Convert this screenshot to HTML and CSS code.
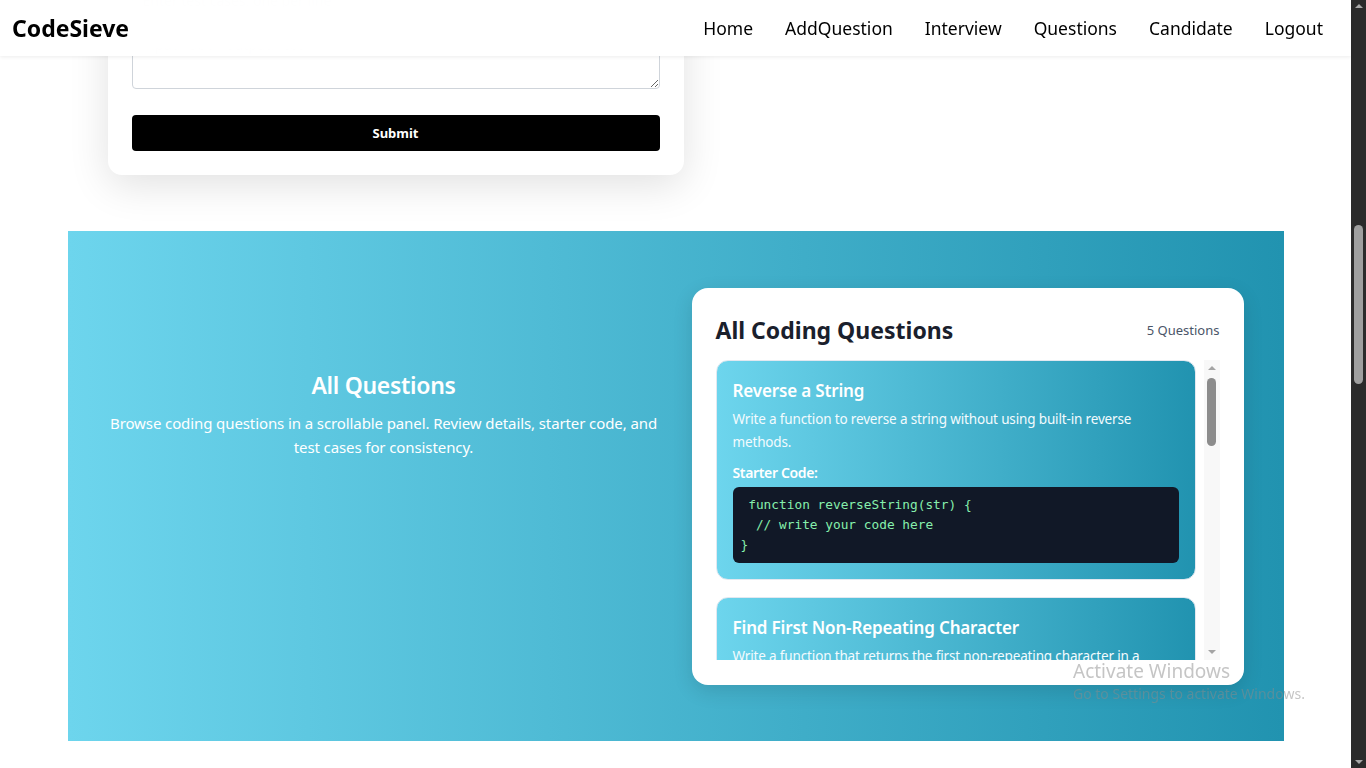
FILE: index.html
```html
<!DOCTYPE html>
<html lang="en">
<head>
<meta charset="utf-8">
<title>CodeSieve</title>
<link rel="stylesheet" href="styles.css">
</head>
<body>
<header class="topbar">
  <div class="logo">CodeSieve</div>
  <nav class="nav">
    <a href="#">Home</a>
    <a href="#">AddQuestion</a>
    <a href="#">Interview</a>
    <a href="#">Questions</a>
    <a href="#">Candidate</a>
    <a href="#">Logout</a>
  </nav>
</header>

<div class="viewport">
  <div class="page">
    <main class="content">
      <section class="form-wrap">
        <form class="form-card">
          <label class="field-label">Test Cases</label>
          <textarea class="field-area" placeholder="Enter test cases, one per line&#10;e.g. input: &quot;hello&quot;  output: &quot;olleh&quot;&#10;input: &quot;abc&quot;  output: &quot;cba&quot;"></textarea>
          <button type="button" class="submit-btn">Submit</button>
        </form>
      </section>

      <section class="questions">
        <div class="intro">
          <h2>All Questions</h2>
          <p>Browse coding questions in a scrollable panel. Review details, starter code, and test cases for consistency.</p>
        </div>

        <div class="panel">
          <div class="panel-head">
            <h3>All Coding Questions</h3>
            <span class="count">5 Questions</span>
          </div>
          <div class="list-wrap">
            <div class="list">
              <article class="q-card">
                <h4>Reverse a String</h4>
                <p class="q-desc">Write a function to reverse a string without using built-in reverse methods.</p>
                <div class="q-label">Starter Code:</div>
                <pre class="q-code"> function reverseString(str) {
  // write your code here
}</pre>
              </article>
              <article class="q-card">
                <h4>Find First Non-Repeating Character</h4>
                <p class="q-desc">Write a function that returns the first non-repeating character in a string.</p>
                <div class="q-label">Starter Code:</div>
                <pre class="q-code"> function firstUniqueChar(str) {
  // write your code here
}</pre>
              </article>
              <article class="q-card">
                <h4>Two Sum</h4>
                <p class="q-desc">Return the indices of the two numbers that add up to a target.</p>
                <div class="q-label">Starter Code:</div>
                <pre class="q-code"> function twoSum(nums, target) {
  // write your code here
}</pre>
              </article>
            </div>
            <div class="vbar">
              <span class="arrow-up"></span>
              <span class="vthumb"></span>
              <span class="vspace"></span>
              <span class="arrow-down"></span>
            </div>
          </div>
        </div>
      </section>
    </main>
  </div>
  <div class="page-scrollbar">
    <span class="psb-up"></span>
    <span class="psb-thumb"></span>
    <span class="psb-space"></span>
    <span class="psb-down"></span>
  </div>
</div>

<div class="watermark">
  <div class="wm-title">Activate Windows</div>
  <div class="wm-sub">Go to Settings to activate Windows.</div>
</div>
</body>
</html>
```

FILE: styles.css
```css
* {
  box-sizing: border-box;
  margin: 0;
  padding: 0;
}

html,
body {
  height: 100%;
  overflow: hidden;
}

body {
  font-family: "Noto Sans", "Open Sans", sans-serif;
  background: #ffffff;
  color: #111111;
}

/* ---------- header ---------- */
.topbar {
  position: fixed;
  top: 0;
  left: 0;
  right: 15px;
  height: 56px;
  display: flex;
  align-items: center;
  justify-content: space-between;
  padding: 0 28px 0 12px;
  background: rgba(255, 255, 255, 0.965);
  backdrop-filter: blur(10px);
  box-shadow: 0 1px 4px rgba(0, 0, 0, 0.08);
  z-index: 10;
}

.logo {
  font-size: 23px;
  font-weight: 700;
  color: #000;
}

.nav {
  display: flex;
  gap: 32px;
}

.nav a {
  font-size: 17.5px;
  color: #000;
  text-decoration: none;
}

/* ---------- viewport ---------- */
.viewport {
  display: flex;
  height: 100vh;
}

.page {
  flex: 1;
  overflow: hidden;
  background: #fff;
}

.content {
  margin-top: -73px;
}

/* ---------- page scrollbar ---------- */
.page-scrollbar {
  width: 15px;
  flex-shrink: 0;
  background: #2b2b2b;
  display: flex;
  flex-direction: column;
  align-items: center;
}

.psb-up,
.psb-down {
  height: 12px;
  display: flex;
  align-items: center;
  justify-content: center;
}

.psb-up::before {
  content: "";
  border-left: 4px solid transparent;
  border-right: 4px solid transparent;
  border-bottom: 4px solid #a8a8a8;
}

.psb-down::before {
  content: "";
  border-left: 4px solid transparent;
  border-right: 4px solid transparent;
  border-top: 4px solid #a8a8a8;
}

.psb-thumb {
  margin-top: 213px;
  width: 9px;
  height: 159px;
  border-radius: 5px;
  background: #9f9f9f;
}

.psb-space {
  flex: 1;
}

/* ---------- form card ---------- */
.form-wrap {
  max-width: 1216px;
  margin: 0 auto;
  padding: 0 40px;
}

.form-card {
  width: 576px;
  background: #fff;
  border-radius: 14px;
  padding: 24px;
  box-shadow: 0 10px 40px rgba(0, 0, 0, 0.12);
}

.field-label {
  display: block;
  font-size: 14px;
  line-height: 20px;
  font-weight: 600;
  margin-bottom: 8px;
}

.field-area {
  display: block;
  width: 100%;
  height: 110px;
  padding: 10px;
  border: 1px solid #cfd4da;
  border-radius: 4px;
  font-family: "Noto Sans", sans-serif;
  font-size: 14px;
  line-height: 22px;
  color: #333;
}

.field-area::placeholder {
  color: #b5b5b5;
}

.submit-btn {
  display: block;
  width: 100%;
  height: 36px;
  margin-top: 26px;
  border: none;
  border-radius: 4px;
  background: #000;
  color: #fff;
  font-family: "Noto Sans", sans-serif;
  font-size: 13px;
  font-weight: 700;
}

/* ---------- questions section ---------- */
.questions {
  max-width: 1216px;
  margin: 56px auto 0;
  padding: 57px 40px 56px;
  display: grid;
  grid-template-columns: 1fr 1fr;
  gap: 32px;
  align-items: start;
  background: linear-gradient(to right, #6dd5ed, #2193b0);
}

.intro {
  padding-top: 79px;
  text-align: center;
  color: #fff;
}

.intro h2 {
  font-size: 23px;
  line-height: 36px;
  font-weight: 600;
  letter-spacing: -0.3px;
  margin-bottom: 8px;
}

.intro p {
  font-size: 15px;
  line-height: 24px;
  letter-spacing: -0.1px;
}

/* ---------- panel ---------- */
.panel {
  background: #fff;
  border-radius: 16px;
  padding: 24px 24px 25px;
  box-shadow: 0 6px 20px rgba(0, 0, 0, 0.12);
}

.panel-head {
  display: flex;
  justify-content: space-between;
  align-items: center;
  margin-bottom: 12px;
}

.panel-head h3 {
  font-size: 23px;
  line-height: 36px;
  font-weight: 700;
  color: #1a202c;
}

.count {
  font-size: 13px;
  color: #4a5568;
}

.list-wrap {
  display: flex;
  gap: 8px;
  height: 300px;
}

.list {
  flex: 1;
  overflow: hidden;
  display: flex;
  flex-direction: column;
  gap: 17px;
}

.q-card {
  flex-shrink: 0;
  border: 1px solid #e2e8f0;
  border-radius: 12px;
  padding: 16px;
  background: linear-gradient(to right, #6dd5ed, #2193b0);
  color: #fff;
}

.q-card h4 {
  font-size: 17px;
  line-height: 28px;
  font-weight: 600;
  letter-spacing: -0.15px;
  margin-bottom: 3px;
}

.q-desc {
  font-size: 13.5px;
  line-height: 23px;
  letter-spacing: -0.15px;
  color: #f3fbfe;
}

.q-label {
  margin-top: 9px;
  font-size: 14px;
  line-height: 20px;
  font-weight: 600;
  letter-spacing: -0.35px;
}

.q-code {
  margin-top: 4px;
  padding: 8px;
  border-radius: 6px;
  background: #111827;
  color: #86efac;
  font-family: "DejaVu Sans Mono", "Liberation Mono", monospace;
  font-size: 12.8px;
  line-height: 20px;
  white-space: pre;
}

/* ---------- inner scrollbar ---------- */
.vbar {
  width: 16px;
  flex-shrink: 0;
  background: #f8f8f8;
  display: flex;
  flex-direction: column;
  align-items: center;
}

.arrow-up,
.arrow-down {
  height: 16px;
  display: flex;
  align-items: center;
  justify-content: center;
}

.arrow-up::before {
  content: "";
  border-left: 4px solid transparent;
  border-right: 4px solid transparent;
  border-bottom: 4px solid #a3a3a3;
}

.arrow-down::before {
  content: "";
  border-left: 4px solid transparent;
  border-right: 4px solid transparent;
  border-top: 4px solid #a3a3a3;
}

.vthumb {
  margin-top: 2px;
  width: 9px;
  height: 68px;
  border-radius: 5px;
  background: #8c8c8c;
}

.vspace {
  flex: 1;
}

/* ---------- watermark ---------- */
.watermark {
  position: fixed;
  left: 1073px;
  top: 659px;
  color: rgba(140, 140, 140, 0.5);
  z-index: 20;
  pointer-events: none;
}

.wm-title {
  font-size: 19px;
  line-height: 24px;
}

.wm-sub {
  margin-top: 1px;
  font-size: 14px;
  line-height: 20px;
}
```
